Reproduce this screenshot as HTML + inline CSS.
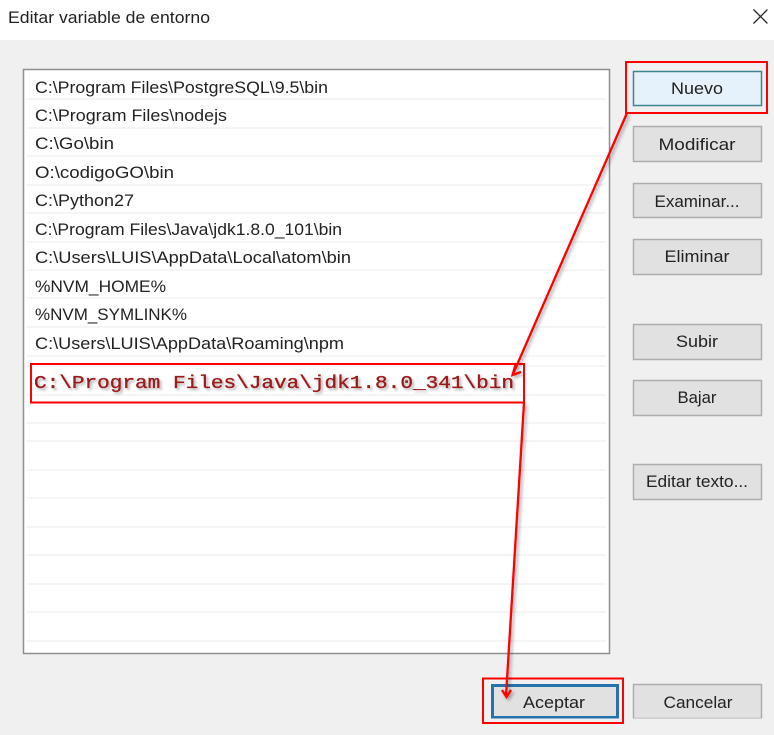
<!DOCTYPE html>
<html lang="es"><head><meta charset="utf-8"><title>Editar variable de entorno</title>
<style>
html,body{margin:0;padding:0;background:#f0f0f0}
svg{display:block}
text{font-family:"Liberation Sans",sans-serif;font-size:16.5px;fill:#222}
.b{fill:#e1e1e1;stroke:#adadad;stroke-width:1.5}
.c{text-anchor:middle}
.l{stroke:#efefef;stroke-width:1.2}
</style></head><body>
<svg width="774" height="735" viewBox="0 0 774 735" xmlns="http://www.w3.org/2000/svg">
<defs>
<filter id="s" x="-20%" y="-5%" width="140%" height="110%"><feDropShadow dx="2" dy="2" stdDeviation="1.5" flood-color="#000" flood-opacity=".35"/></filter>
<filter id="t" x="-2%" y="-20%" width="104%" height="140%"><feGaussianBlur in="SourceGraphic" stdDeviation=".3" result="g"/><feDropShadow in="g" dx="2" dy="2" stdDeviation="1.2" flood-color="#000" flood-opacity=".3"/></filter>
<filter id="a" x="0" y="0" width="100%" height="100%"><feGaussianBlur stdDeviation=".35"/></filter>
</defs>
<rect width="774" height="735" fill="#f0f0f0"/>
<rect width="774" height="40" fill="#fff"/>
<g filter="url(#a)">
<text x="8" y="23" textLength="202" lengthAdjust="spacingAndGlyphs">Editar variable de entorno</text>
<path d="M753.500 9.500 L767.500 23.500 M767.500 9.500 L753.500 23.500" stroke="#222" stroke-width="1.300" fill="none"/>

<rect x="23.500" y="69.500" width="586" height="584" fill="#fff" stroke="#8f8f8f" stroke-width="1.500"/>
<path class="l" d="M27 99H606M27 128H606M27 156H606M27 185H606M27 213H606M27 242H606M27 270H606M27 298H606M27 327H606M27 356H606M27 366H606M27 395H606M27 423H606M27 441H606M27 470H606M27 498H606M27 527H606M27 555H606M27 584H606M27 612H606M27 641H606"/>
<text x="35" y="93" textLength="293" lengthAdjust="spacingAndGlyphs">C:\Program Files\PostgreSQL\9.5\bin</text>
<text x="35" y="121" textLength="192" lengthAdjust="spacingAndGlyphs">C:\Program Files\nodejs</text>
<text x="35" y="149" textLength="79" lengthAdjust="spacingAndGlyphs">C:\Go\bin</text>
<text x="35" y="178" textLength="139" lengthAdjust="spacingAndGlyphs">O:\codigoGO\bin</text>
<text x="35" y="206" textLength="99" lengthAdjust="spacingAndGlyphs">C:\Python27</text>
<text x="35" y="235" textLength="307" lengthAdjust="spacingAndGlyphs">C:\Program Files\Java\jdk1.8.0_101\bin</text>
<text x="35" y="263" textLength="316" lengthAdjust="spacingAndGlyphs">C:\Users\LUIS\AppData\Local\atom\bin</text>
<text x="35" y="292" textLength="131" lengthAdjust="spacingAndGlyphs">%NVM_HOME%</text>
<text x="35" y="320" textLength="152" lengthAdjust="spacingAndGlyphs">%NVM_SYMLINK%</text>
<text x="35" y="349" textLength="309" lengthAdjust="spacingAndGlyphs">C:\Users\LUIS\AppData\Roaming\npm</text>

<rect class="b" x="633.500" y="71.500" width="128" height="34" style="fill:#e5f1fb;stroke:#3f8494"/>
<rect class="b" x="633.500" y="126.500" width="128" height="35"/>
<rect class="b" x="633.500" y="183.500" width="128" height="34"/>
<rect class="b" x="633.500" y="239.500" width="128" height="35"/>
<rect class="b" x="633.500" y="324.500" width="128" height="35"/>
<rect class="b" x="633.500" y="380.500" width="128" height="35"/>
<rect class="b" x="633.500" y="464.500" width="128" height="35"/>
<rect class="b" x="633.500" y="684.500" width="128" height="34"/>
<rect class="b" x="492.500" y="685.500" width="125" height="32" style="stroke:#2672ac;stroke-width:3"/>
<text class="c" x="697" y="94" textLength="52" lengthAdjust="spacingAndGlyphs">Nuevo</text>
<text class="c" x="697" y="150" textLength="77" lengthAdjust="spacingAndGlyphs">Modificar</text>
<text class="c" x="697" y="207" textLength="85" lengthAdjust="spacingAndGlyphs">Examinar...</text>
<text class="c" x="697" y="262" textLength="65" lengthAdjust="spacingAndGlyphs">Eliminar</text>
<text class="c" x="697" y="347" textLength="42" lengthAdjust="spacingAndGlyphs">Subir</text>
<text class="c" x="697" y="403" textLength="39" lengthAdjust="spacingAndGlyphs">Bajar</text>
<text class="c" x="697" y="487" textLength="102" lengthAdjust="spacingAndGlyphs">Editar texto...</text>
<text class="c" x="554" y="708" textLength="62" lengthAdjust="spacingAndGlyphs">Aceptar</text>
<text class="c" x="698" y="708" textLength="69" lengthAdjust="spacingAndGlyphs">Cancelar</text>
</g>

<text x="34" y="388" textLength="480" lengthAdjust="spacingAndGlyphs" filter="url(#t)" style="font-family:'Liberation Mono',monospace;font-size:18px;fill:#9a1a1a;stroke:#9a1a1a;stroke-width:.35">C:\Program Files\Java\jdk1.8.0_341\bin</text>
<rect x="31" y="364" width="493" height="38.500" fill="none" stroke="#f00" stroke-width="2"/>
<rect x="626" y="62" width="141" height="51" fill="none" stroke="#f00" stroke-width="2"/>
<rect x="483" y="678.500" width="140" height="44.500" fill="none" stroke="#f00" stroke-width="2"/>
<g filter="url(#s)" fill="none" stroke="#f00" stroke-width="2.300">
<path d="M627 113L513 374"/>
<path d="M516 363L512.500 375L521 372"/>
<path d="M524 403L506 696"/>
<path d="M502 690L506.500 697L511 690"/>
</g>
</svg>
</body></html>
